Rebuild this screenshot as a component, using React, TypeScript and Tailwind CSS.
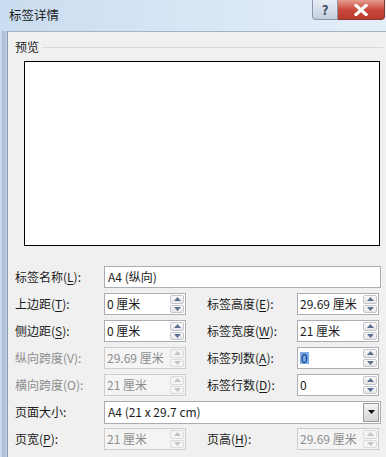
import React from 'react';

type Field = {
  label: string;
  key?: string;
  value: string;
  disabled?: boolean;
  selected?: boolean;
};

const rows: [Field, Field][] = [
  [
    { label: '上边距', key: 'T', value: '0 厘米' },
    { label: '标签高度', key: 'E', value: '29.69 厘米' },
  ],
  [
    { label: '侧边距', key: 'S', value: '0 厘米' },
    { label: '标签宽度', key: 'W', value: '21 厘米' },
  ],
  [
    { label: '纵向跨度(V):', value: '29.69 厘米', disabled: true },
    { label: '标签列数', key: 'A', value: '0', selected: true },
  ],
  [
    { label: '横向跨度(O):', value: '21 厘米', disabled: true },
    { label: '标签行数', key: 'D', value: '0' },
  ],
];

function Label({ f, width }: { f: Field; width: string }) {
  return (
    <div className={`${width} shrink-0 whitespace-nowrap ${f.disabled ? 'text-[#8d8d8d]' : 'text-[#1b1b1b]'}`}>
      {f.key ? (
        <>
          {f.label}(<span className="underline underline-offset-2">{f.key}</span>):
        </>
      ) : (
        f.label
      )}
    </div>
  );
}

function Arrow({ up, color }: { up?: boolean; color: string }) {
  return (
    <svg width="7" height="4" viewBox="0 0 7 4">
      <path d={up ? 'M0 4 L3.5 0 L7 4 Z' : 'M0 0 L3.5 4 L7 0 Z'} fill={color} />
    </svg>
  );
}

function SpinBox({ f }: { f: Field }) {
  const arrow = f.disabled ? '#c4c4c4' : '#5a6f94';
  return (
    <div
      className={`flex h-[22px] w-[82px] shrink-0 border ${
        f.disabled ? 'border-[#cdcdcd] bg-[#f4f4f4] text-[#8d8d8d]' : 'border-[#abadb3] bg-white text-[#1b1b1b]'
      }`}
    >
      <div className="flex flex-1 items-center pl-[2px]">
        {f.selected ? <span className="bg-[#78aee8] px-px text-[#10307a]">{f.value}</span> : <span>{f.value}</span>}
      </div>
      <div className="flex w-[15px] flex-col gap-px py-px pr-px">
        <div
          className={`flex flex-1 items-center justify-center rounded-[2px] border ${
            f.disabled ? 'border-[#dadada] bg-[#f4f4f4]' : 'border-[#c3c6cc] bg-linear-to-b from-[#fbfbfb] to-[#e5e5e5]'
          }`}
        >
          <Arrow up color={arrow} />
        </div>
        <div
          className={`flex flex-1 items-center justify-center rounded-[2px] border ${
            f.disabled ? 'border-[#dadada] bg-[#f4f4f4]' : 'border-[#c3c6cc] bg-linear-to-b from-[#fbfbfb] to-[#e5e5e5]'
          }`}
        >
          <Arrow color={arrow} />
        </div>
      </div>
    </div>
  );
}

export default function App() {
  return (
    <div className="flex h-[457px] w-[386px] flex-col overflow-hidden bg-[#f0f0f0] font-['Noto_Sans_CJK_SC',sans-serif] text-[12px] leading-none">
      {/* title bar */}
      <div className="flex h-[31px] shrink-0 items-start bg-linear-to-r from-[#cadcef] via-[#d8e6f5] to-[#e4eef8]">
        <div className="flex h-full flex-1 items-center pl-[9px] text-[12.5px] text-[#1a1a1a]">标签详情</div>
        <div className="flex h-[20px] w-[26px] items-center justify-center rounded-bl-[4px] border border-t-0 border-[#8a98ad] bg-linear-to-b from-[#e9eef5] to-[#c3cedd] text-[13px] font-bold text-[#3d4a5e]">
          ?
        </div>
        <div className="mr-[1px] flex h-[20px] w-[47px] items-center justify-center rounded-br-[4px] border border-t-0 border-l-0 border-[#8a3a34] bg-linear-to-b from-[#e49c8f] via-[#c9493c] to-[#b73a2c]">
          <svg width="14" height="12" viewBox="0 0 14 12">
            <path d="M2 1.5 L12 10.5 M12 1.5 L2 10.5" stroke="#fff" strokeWidth="3.2" strokeLinecap="square" />
          </svg>
        </div>
      </div>

      <div className="flex flex-1">
        {/* left window frame */}
        <div className="w-[8px] shrink-0 border-r border-[#8c9aae] bg-linear-to-r from-[#d6e2ef] via-[#a9bdd5] to-[#c4d4e6]" />

        <div className="flex flex-1 flex-col border-t border-[#a6b3c4]">
          {/* preview group */}
          <div className="flex items-center pl-[7px] pt-[9px]">
            <span className="text-[#1b1b1b]">预览</span>
            <div className="ml-[3px] mr-[3px] h-px flex-1 bg-[#d5dbe2]" />
          </div>
          <div className="ml-[16px] mr-[6px] mt-[8px] h-[185px] border border-black bg-white" />

          {/* fields */}
          <div className="mt-[20px] flex flex-col gap-[5px] pl-[7px]">
            <div className="flex h-[22px] items-center">
              <Label f={{ label: '标签名称', key: 'L', value: '' }} width="w-[89px]" />
              <div className="flex h-[22px] w-[277px] items-center border border-[#abadb3] bg-white pl-[3px] text-[#1b1b1b]">
                A4 (纵向)
              </div>
            </div>

            {rows.map(([l, r]) => (
              <div key={l.label} className="flex h-[22px] items-center">
                <Label f={l} width="w-[89px]" />
                <SpinBox f={l} />
                <div className="w-[21px] shrink-0" />
                <Label f={r} width="w-[90px]" />
                <SpinBox f={r} />
              </div>
            ))}

            <div className="flex h-[22px] items-center">
              <Label f={{ label: '页面大小:', value: '' }} width="w-[89px]" />
              <div className="flex h-[23px] w-[277px] items-center border border-[#abadb3] bg-white text-[#1b1b1b]">
                <div className="flex-1 pl-[3px]">A4 (21 x 29.7 cm)</div>
                <div className="mr-px flex h-[19px] w-[16px] items-center justify-center border border-[#9a9a9a] bg-linear-to-b from-[#f4f4f4] to-[#d4d4d4]">
                  <svg width="7" height="4" viewBox="0 0 7 4">
                    <path d="M0 0 L3.5 4 L7 0 Z" fill="#111" />
                  </svg>
                </div>
              </div>
            </div>

            <div className="flex h-[22px] items-center">
              <Label f={{ label: '页宽', key: 'P', value: '' }} width="w-[89px]" />
              <SpinBox f={{ label: '', value: '21 厘米', disabled: true }} />
              <div className="w-[21px] shrink-0" />
              <Label f={{ label: '页高', key: 'H', value: '' }} width="w-[90px]" />
              <SpinBox f={{ label: '', value: '29.69 厘米', disabled: true }} />
            </div>
          </div>
        </div>
      </div>
    </div>
  );
}
